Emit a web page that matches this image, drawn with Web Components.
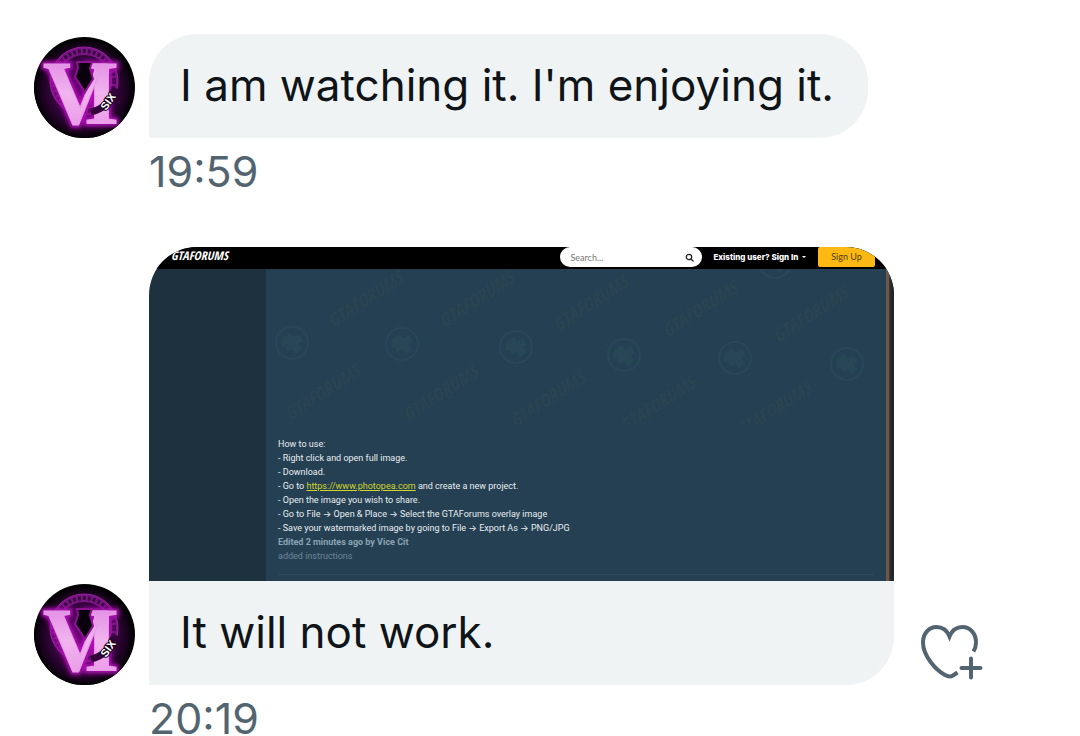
<!DOCTYPE html>
<html lang="en">
<head>
<meta charset="utf-8">
<meta name="viewport" content="width=device-width, initial-scale=1">
<title>Messages</title>
<style>
  body {
    margin: 0;
    background: #fff;
    font-family: Inter, "Liberation Sans", sans-serif;
  }
</style>
</head>
<body>
<chat-thread>
  <chat-message time="19:59">
    <chat-bubble>I am watching it. I'm enjoying it.</chat-bubble>
  </chat-message>
  <chat-message time="20:19" reactable>
    <forum-preview></forum-preview>
    <chat-bubble attached>It will not work.</chat-bubble>
  </chat-message>
</chat-thread>

<script>
class ChatThread extends HTMLElement {
  constructor() {
    super();
    this.attachShadow({ mode: 'open' });
    this.shadowRoot.innerHTML = `
      <style>
        :host {
          display: flex;
          flex-direction: column;
          gap: 58px;
          padding: 34px 34px 0;
        }
      </style>
      <slot></slot>
    `;
  }
}

class UserAvatar extends HTMLElement {
  constructor() {
    super();
    this.attachShadow({ mode: 'open' });
    this.shadowRoot.innerHTML = `
      <style>
        :host {
          display: block;
          flex: none;
          width: 101px;
          height: 101px;
          border-radius: 50%;
          overflow: hidden;
          background: #000;
        }
        svg { display: block; }
        .letters {
          font: bold 90px "Liberation Serif", serif;
        }
        .six {
          font: bold 11px "Liberation Sans", sans-serif;
        }
      </style>
      <svg width="101" height="101" viewBox="0 0 101 101" role="img" aria-label="VI">
        <defs>
          <radialGradient id="glow">
            <stop offset="0" stop-color="#6d0478"/>
            <stop offset=".6" stop-color="#3c0444"/>
            <stop offset=".88" stop-color="#16021a"/>
            <stop offset="1" stop-color="#000"/>
          </radialGradient>
          <linearGradient id="fill" x1="0" y1="0" x2="0" y2="1">
            <stop offset="0" stop-color="#dd7be0"/>
            <stop offset=".5" stop-color="#f0b4ee"/>
            <stop offset="1" stop-color="#ea8fe7"/>
          </linearGradient>
          <filter id="blur"><feGaussianBlur stdDeviation="2"/></filter>
        </defs>
        <circle cx="50" cy="52" r="50" fill="url(#glow)"/>
        <circle cx="50" cy="44" r="30" fill="none" stroke="#7a1783" stroke-width="8"/>
        <circle cx="50" cy="44" r="30" fill="none" stroke="#3d0a45" stroke-width="4" stroke-dasharray="3 2"/>
        <circle cx="50" cy="44" r="34" fill="none" stroke="#9a1da3" stroke-width="1"/>
        <g class="letters" fill="#b010b6" stroke="#b010b6" stroke-width="6" filter="url(#blur)">
          <text x="9" y="87">V</text>
          <text x="50" y="87">I</text>
        </g>
        <g class="letters" fill="url(#fill)" stroke="#e79be6" stroke-width="1">
          <text x="50" y="87">I</text>
          <text x="9" y="87">V</text>
        </g>
        <path d="M43 25h15l-2 6 3 11-8 13-10-15 3-9z" fill="#0b000d" stroke="#8c1292" stroke-width="2"/>
        <path d="M57 75q18-4 24-24" fill="none" stroke="#32063a" stroke-width="7"/>
        <text class="six" x="72" y="74" transform="rotate(-54 72 74)" fill="#fff" stroke="#16021a" stroke-width="2" paint-order="stroke">SIX</text>
      </svg>
    `;
  }
}

class ReactButton extends HTMLElement {
  constructor() {
    super();
    this.attachShadow({ mode: 'open' });
    this.shadowRoot.innerHTML = `
      <style>
        :host { display: block; flex: none; }
        button {
          display: block;
          padding: 0;
          border: 0;
          background: none;
          color: #536471;
          cursor: pointer;
        }
        svg { display: block; }
      </style>
      <button type="button" aria-label="Add reaction">
        <svg width="64" height="58" viewBox="0 0 64 58" fill="none" stroke="currentColor" stroke-width="4">
          <path d="M53.500 27.500C55 25 56 22 56 18.500C56 9.500 50 3 42.500 3C36.500 3 32 6.500 29.500 12.500C27 6.500 22.500 3 16.500 3C9 3 3 9.500 3 18.500C3 32 16 46 25 51Q29.500 53.500 33 51.500L37.500 48.500"/>
          <path d="M51 34.500v19M41.500 44h19" stroke-linecap="round"/>
        </svg>
      </button>
    `;
  }
}

class ChatBubble extends HTMLElement {
  constructor() {
    super();
    this.attachShadow({ mode: 'open' });
    this.shadowRoot.innerHTML = `
      <style>
        :host {
          display: block;
          box-sizing: border-box;
          width: fit-content;
          padding: 21px 34px 23px 31px;
          border-radius: 48px 48px 48px 0;
          background: #eff3f4;
          color: #0f1419;
          font-size: 44px;
          line-height: 60px;
        }
        :host([attached]) {
          width: auto;
          border-radius: 0 0 48px 0;
        }
      </style>
      <slot></slot>
    `;
  }
}

class ForumPreview extends HTMLElement {
  constructor() {
    super();
    this.attachShadow({ mode: 'open' });

    const words = [
      [333, 328], [444, 328], [558, 332], [667, 338], [778, 343],
      [290, 421], [408, 422], [515, 428], [625, 433], [741, 438]
    ];
    const badges = [[292, 343], [402, 344], [516, 347], [624, 355], [735, 358], [847, 364], [775, 262]];
    // pattern coordinates are offset by the view box
    const pattern = words.map(([x, y]) =>
      `<text x="${x}" y="${y}" transform="rotate(-33 ${x} ${y})">GTAFORUMS</text>`
    ).join('') + badges.map(([x, y]) => `
      <g transform="translate(${x} ${y})">
        <circle r="16" fill="none" stroke="#2a4757" stroke-width="2"/>
        <path d="M-10-5l7-5 4 4 6-3 4 7-4 2 3 6-7 5-2-5-6 2-2-5-4 1z" fill="#294656"/>
      </g>`).join('');

    this.shadowRoot.innerHTML = `
      <style>
        :host {
          display: block;
          border-radius: 48px 48px 0 0;
          overflow: hidden;
          background: #1d313e;
          font-size: 9px;
          line-height: 14px;
        }
        header {
          display: flex;
          align-items: flex-end;
          box-sizing: border-box;
          height: 22px;
          padding: 0 19px 2px 8px;
          overflow: hidden;
          background: #000;
          color: #fff;
        }
        .logo {
          display: flex;
          align-items: center;
          gap: 4px;
          margin-right: auto;
          padding-bottom: 3px;
          font: italic bold 12px "Liberation Sans Narrow", "Open Sans Condensed", "Liberation Sans", sans-serif;
        }
        .search {
          display: flex;
          align-items: center;
          box-sizing: border-box;
          width: 142px;
          height: 20px;
          padding: 0 8px 0 10px;
          border-radius: 10px;
          background: #fff;
        }
        input {
          flex: 1;
          min-width: 0;
          padding: 0;
          border: 0;
          background: none;
          font: 9px Lato, sans-serif;
        }
        input::placeholder { color: #777; opacity: 1; }
        .user {
          padding: 0 11px 3px;
          color: #fff;
          font-size: 8px;
          font-weight: 800;
          text-decoration: none;
        }
        .user svg { margin-left: 2px; }
        .signup {
          box-sizing: border-box;
          width: 57px;
          height: 20px;
          padding: 0 0 2px;
          border: 0;
          border-radius: 2px;
          background: #fdb913;
          color: #4c3b0b;
          font: 9px Lato, sans-serif;
        }
        .page {
          display: grid;
          grid-template-columns: 117px minmax(0, 1fr) 8px;
        }
        .post {
          padding-bottom: 6px;
          background: #254053;
          color: #e8edf0;
        }
        .edge {
          border-left: 3px solid #6b5848;
          background: linear-gradient(90deg, #403831 1px, #22272a 2px);
        }
        .pattern {
          display: block;
          width: 100%;
          height: 168px;
          font: italic bold 18px "Liberation Sans Narrow", "Open Sans Condensed", "Liberation Sans", sans-serif;
        }
        .text {
          margin: 0 12px;
          padding-bottom: 11px;
          border-bottom: 1px solid #2c485b;
          font-family: Roboto, Inter, sans-serif;
        }
        p { margin: 0; }
        .text a { color: #d0d52b; }
        .edited { color: #8ba3b5; font-weight: 700; }
        .note { color: #6d8799; }
      </style>
      <header>
        <div class="logo">
          <svg width="10" height="12" viewBox="0 0 10 12" fill="none" stroke="#fff">
            <path d="M9 1q0 7-7 9M6 2l-1 4-4 2"/>
          </svg>
          <span>GTAFORUMS</span>
        </div>
        <label class="search">
          <input type="text" placeholder="Search..." aria-label="Search">
          <svg width="9" height="9" viewBox="0 0 9 9" fill="none" stroke="#222" stroke-width="1.300">
            <circle cx="4" cy="4" r="2.700"/>
            <path d="M6 6l2.500 2.500"/>
          </svg>
        </label>
        <a class="user" href="#">Existing user? Sign In <svg width="5" height="5" viewBox="0 0 5 5"><path d="M0 1h4l-2 2z" fill="#fff"/></svg></a>
        <button class="signup" type="button">Sign Up</button>
      </header>
      <div class="page">
        <div></div>
        <div class="post">
          <svg class="pattern" viewBox="266 269 620 168" preserveAspectRatio="xMinYMin meet" fill="#2a4450" aria-hidden="true">
            <clipPath id="band"><path d="M266 269h620v155h-620z"/></clipPath>
            <g clip-path="url(#band)">${pattern}</g>
          </svg>
          <div class="text">
            <p>How to use:</p>
            <p>- Right click and open full image.</p>
            <p>- Download.</p>
            <p>- Go to <a href="https://www.photopea.com">https://www.photopea.com</a> and create a new project.</p>
            <p>- Open the image you wish to share.</p>
            <p>- Go to File → Open &amp; Place → Select the GTAForums overlay image</p>
            <p>- Save your watermarked image by going to File → Export As → PNG/JPG</p>
            <p class="edited">Edited 2 minutes ago by Vice Cit</p>
            <p class="note">added instructions</p>
          </div>
        </div>
        <div class="edge"></div>
      </div>
    `;
  }
}

class ChatMessage extends HTMLElement {
  constructor() {
    super();
    this.attachShadow({ mode: 'open' });
    this.shadowRoot.innerHTML = `
      <style>
        :host { display: block; }
        .row {
          display: flex;
          align-items: flex-end;
          gap: 14px;
        }
        .content {
          flex: 1;
          min-width: 0;
          max-width: 745px;
        }
        react-button {
          margin-left: 12px;
          padding-bottom: 3px;
        }
        time {
          display: block;
          margin: 15px 0 0 115px;
          color: #536471;
          font-size: 43px;
          line-height: 36px;
        }
      </style>
      <div class="row">
        <user-avatar></user-avatar>
        <div class="content"><slot></slot></div>
      </div>
      <time></time>
    `;
  }

  connectedCallback() {
    this.shadowRoot.querySelector('time').textContent = this.getAttribute('time');
    if (this.hasAttribute('reactable')) {
      this.shadowRoot.querySelector('.row').append(document.createElement('react-button'));
    }
  }
}

customElements.define('user-avatar', UserAvatar);
customElements.define('react-button', ReactButton);
customElements.define('chat-bubble', ChatBubble);
customElements.define('forum-preview', ForumPreview);
customElements.define('chat-message', ChatMessage);
customElements.define('chat-thread', ChatThread);
</script>
</body>
</html>
